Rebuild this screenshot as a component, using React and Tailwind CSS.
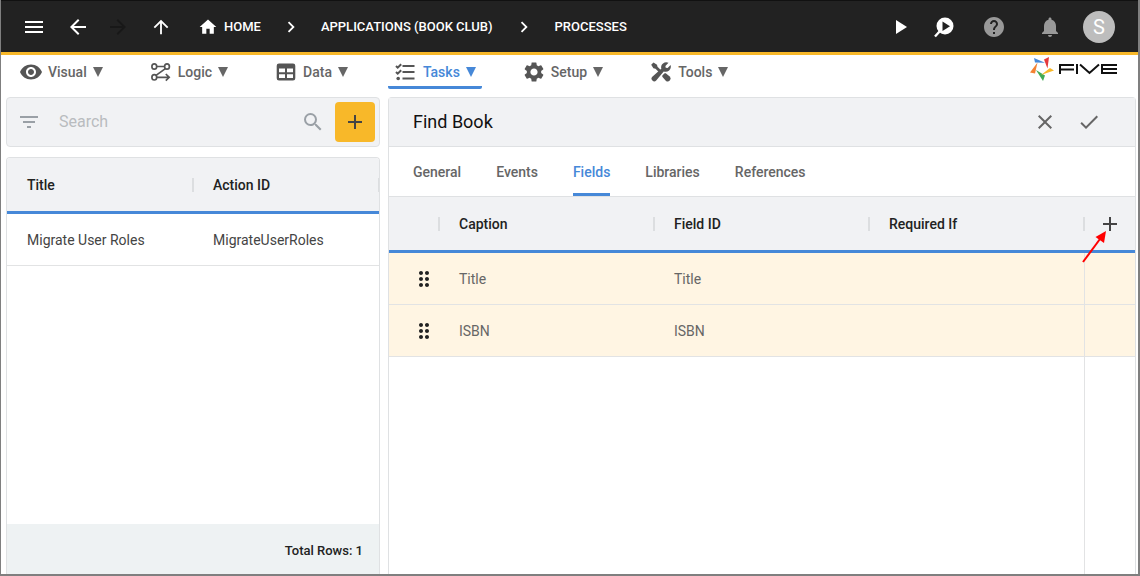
import React, { useState } from "react";
import {
  MdAdd,
  MdArrowBack,
  MdArrowForward,
  MdArrowUpward,
  MdCheck,
  MdChevronRight,
  MdClose,
  MdDragIndicator,
  MdFilterList,
  MdHelp,
  MdHome,
  MdMenu,
  MdNotifications,
  MdPlayArrow,
  MdSearch,
  MdSettings,
  MdVisibility,
} from "react-icons/md";

const InspectIcon = () => (
  <svg width="24" height="24" viewBox="0 0 24 24" fill="none">
    <path d="M8 16L3 21.500" stroke="#fff" strokeWidth="2.400" />
    <circle cx="13" cy="11" r="8.500" fill="#fff" />
    <path d="M10.500 6.500v9.500l7.500-4.750z" fill="#222" />
  </svg>
);

const LogicIcon = () => (
  <svg width="24" height="24" viewBox="0 0 24 24" fill="none" stroke="#555" strokeWidth="1.700">
    <ellipse cx="5.300" cy="6.500" rx="2.400" ry="2.700" />
    <ellipse cx="18" cy="6.500" rx="2.400" ry="2.700" />
    <ellipse cx="5.300" cy="17.300" rx="2.400" ry="2.700" />
    <path d="M7.700 6.500h7.900M16.400 8.600L7 15.400M7.700 17.300H20M16.800 14l3.400 3.300-3.400 3.300" />
  </svg>
);

const TableIcon = () => (
  <svg width="24" height="24" viewBox="0 0 24 24" fill="#555">
    <path
      fillRule="evenodd"
      d="M5 3.500h14a2.300 2.300 0 0 1 2.300 2.300v12.400a2.300 2.300 0 0 1-2.300 2.300H5a2.300 2.300 0 0 1-2.300-2.300V5.800A2.300 2.300 0 0 1 5 3.500zM5 8.500v3.700h6V8.500zM13 8.500v3.700h6V8.500zM5 14.200V18h6v-3.800zM13 14.200V18h6v-3.800z"
    />
  </svg>
);

const TasksIcon = () => (
  <svg width="24" height="24" viewBox="0 0 24 24" fill="none" stroke="#555">
    <path d="M8.500 6H20.500M8.500 12H20.500M8.500 18.500H20.500" strokeWidth="2.200" />
    <path d="M2 6l1.700 1.700L7.200 4.200M2 12l1.700 1.700L7.200 10.200" strokeWidth="2" />
    <circle cx="4.200" cy="18.500" r="1.800" fill="#555" stroke="none" />
  </svg>
);

const ToolsIcon = () => (
  <svg width="24" height="24" viewBox="0 0 24 24" fill="#555">
    <path d="M4.500 2.500L8 4.700l.5 2.100 4 4-2 2-4-4-2.100-.5-2.200-3.500z" />
    <path d="M13.300 15.500l2.300-2.300h1.200l4.200 3.600a2.900 2.900 0 0 1-4 4.100l-3.700-4.100z" />
    <path d="M19.500 2.800l-3.100 3.100.3 1.900 1.900.3 3-3a5.200 5.200 0 0 1-6.900 6.300L7.200 20.500a2.600 2.600 0 0 1-3.900-3.700l9-8a5.200 5.200 0 0 1 7.200-6z" />
  </svg>
);

const FiveLogo = () => (
  <svg width="88" height="26" viewBox="0 0 88 26" role="img" aria-label="Five" className="mt-[2px]">
    <path d="M4 1l1 4.500 10 .2z" fill="#4688d8" />
    <path d="M19 0l-5 2.500 3.500 9z" fill="#e5393c" />
    <path d="M7.500 5.500L0 15.500l5 1z" fill="#f58233" />
    <path d="M6 13l7 11 2-5.500z" fill="#41ab55" />
    <path d="M24 13.500l-4-2.500-9 7z" fill="#f8b829" />
    <g fill="none" stroke="#111" strokeWidth="2">
      <path d="M30 17V8h14M30 12.500h14M47 7v10M50 7.500l9.500 8.500L69 7.500" />
      <path d="M87 8H72v8h15M72 12h15" />
    </g>
  </svg>
);

const menuItems = [
  { label: "Visual", icon: <MdVisibility size={24} /> },
  { label: "Logic", icon: <LogicIcon /> },
  { label: "Data", icon: <TableIcon /> },
  { label: "Tasks", icon: <TasksIcon /> },
  { label: "Setup", icon: <MdSettings size={24} /> },
  { label: "Tools", icon: <ToolsIcon /> },
];

const tabs = ["General", "Events", "Fields", "Libraries", "References"];

const fields = [
  { caption: "Title", fieldId: "Title" },
  { caption: "ISBN", fieldId: "ISBN" },
];

const TopBar = () => (
  <header className="flex h-[55px] shrink-0 items-center justify-between border-t border-b-3 border-t-[#111] border-b-[#f8b829] bg-[#222] pr-[23px] pl-[21px] text-white">
    <div className="flex items-center">
      <button aria-label="Menu"><MdMenu size={24} /></button>
      <button aria-label="Back" className="ml-5"><MdArrowBack size={24} /></button>
      <button aria-label="Forward" className="ml-4 text-[#181818]" disabled><MdArrowForward size={24} /></button>
      <button aria-label="Up" className="ml-5"><MdArrowUpward size={22} /></button>
      <nav className="ml-[26px] flex items-center text-[13px] font-medium">
        <a href="#home" className="flex items-center gap-[6px]">
          <MdHome size={20} />
          HOME
        </a>
        <MdChevronRight size={22} className="mx-[19px]" />
        <a href="#applications">APPLICATIONS (BOOK CLUB)</a>
        <MdChevronRight size={22} className="mx-5" />
        <a href="#processes">PROCESSES</a>
      </nav>
    </div>
    <div className="flex items-center">
      <button aria-label="Run"><MdPlayArrow size={24} /></button>
      <button aria-label="Inspect" className="ml-5"><InspectIcon /></button>
      <button aria-label="Help" className="ml-[26px] text-[#999]"><MdHelp size={24} /></button>
      <button aria-label="Notifications" className="ml-8 text-[#999]"><MdNotifications size={24} /></button>
      <button aria-label="Account" className="ml-[21px] h-8 w-8 rounded-full bg-[#bdbdbd] text-xl leading-8">S</button>
    </div>
  </header>
);

const MainMenu = ({ active, onSelect }) => (
  <div className="flex h-[42px] shrink-0 items-start justify-between pr-5 pl-3">
    <nav className="flex gap-[34px]">
      {menuItems.map(({ label, icon }) => (
        <button
          key={label}
          onClick={() => onSelect(label)}
          className={`flex h-[34px] items-center rounded-b-xs border-b-3 px-[6px] pt-[2px] text-sm font-medium ${
            active === label ? "border-[#4688d8] text-[#4688d8]" : "border-transparent text-[#666]"
          }`}
        >
          <span className="mr-[5px] text-[#555]">{icon}</span>
          {label}
          <svg width="10" height="10" viewBox="0 0 10 10" fill="currentColor" className="ml-[6px]">
            <path d="M0 0h10L5 10z" />
          </svg>
        </button>
      ))}
    </nav>
    <FiveLogo />
  </div>
);

const Divider = () => <span className="-mr-px h-[14px] w-[2px] bg-[#dcdee0]" />;

const ProcessList = () => (
  <aside className="flex w-[374px] shrink-0 flex-col">
    <div className="flex h-[50px] items-center rounded border border-[#dfe1e3] bg-[#f1f2f4] pr-1 pl-[10px] text-[#9aa0a6]">
      <button aria-label="Filter"><MdFilterList size={24} /></button>
      <input
        type="text"
        aria-label="Search"
        placeholder="Search"
        className="ml-[18px] min-w-0 flex-1 bg-transparent text-base text-[#333] outline-none placeholder:text-[#b9bcbf]"
      />
      <button aria-label="Run search"><MdSearch size={24} /></button>
      <button aria-label="Add process" className="ml-[10px] flex h-10 w-10 items-center justify-center rounded bg-[#f8b829] text-[#444]">
        <MdAdd size={24} />
      </button>
    </div>

    <div className="mt-[10px] flex min-h-0 flex-1 flex-col overflow-hidden rounded-t border border-b-0 border-[#dfe1e3]">
      <table className="w-full table-fixed border-separate border-spacing-0 text-left text-sm">
        <thead className="bg-[#f1f2f4] text-[#222]">
          <tr className="h-14">
            {["Title", "Action ID"].map((name) => (
              <th key={name} className="border-b-3 border-[#4688d8] pl-5 font-medium">
                <div className="flex items-center justify-between">{name}<Divider /></div>
              </th>
            ))}
          </tr>
        </thead>
        <tbody className="text-[#444]">
          <tr className="h-[52px]">
            <td className="border-b border-[#e2e3e4] pl-5">Migrate User Roles</td>
            <td className="border-b border-[#e2e3e4] pl-5">MigrateUserRoles</td>
          </tr>
        </tbody>
      </table>
      <div className="mt-auto flex h-[50px] items-center justify-end bg-[#eef2f3] pt-[3px] pr-4 text-[13px] font-medium text-[#222]">
        Total Rows: 1
      </div>
    </div>
  </aside>
);

const FieldsTable = () => (
  <div className="flex min-h-0 flex-1 flex-col">
    <table className="w-full table-fixed border-separate border-spacing-0 text-left text-sm">
      <colgroup>
        <col className="w-[50px]" />
        <col />
        <col />
        <col />
        <col className="w-[51px]" />
      </colgroup>
      <thead className="bg-[#f1f2f4] text-[#222]">
        <tr className="h-14">
          <th className="border-b-3 border-[#4688d8]">
            <div className="flex justify-end"><Divider /></div>
          </th>
          {["Caption", "Field ID", "Required If"].map((name) => (
            <th key={name} className="border-b-3 border-[#4688d8] pl-5 font-medium">
              <div className="flex items-center justify-between">{name}<Divider /></div>
            </th>
          ))}
          <th className="border-b-3 border-[#4688d8]">
            <div className="relative flex justify-center">
              <button aria-label="Add field" className="text-[#444]"><MdAdd size={24} /></button>
              <svg className="absolute top-4 -left-1" width="30" height="36" viewBox="0 0 30 36">
                <path d="M3 34L20 11" stroke="#f00" strokeWidth="2" />
                <path d="M26 3L15.500 9l8.500 6z" fill="#f00" />
              </svg>
            </div>
          </th>
        </tr>
      </thead>
      <tbody className="text-[#666]">
        {fields.map(({ caption, fieldId }) => (
          <tr key={fieldId} className="h-[52px] bg-[#fff5e3]">
            <td className="border-b border-[#e2e3e4] pl-[23px] text-[#222]"><MdDragIndicator size={24} /></td>
            <td className="border-b border-[#e2e3e4] pl-5">{caption}</td>
            <td className="border-b border-[#e2e3e4] pl-5">{fieldId}</td>
            <td className="border-b border-[#e2e3e4]" />
            <td className="border-b border-l border-[#e2e3e4]" />
          </tr>
        ))}
      </tbody>
    </table>
    <div className="flex flex-1 justify-end">
      <div className="w-[51px] border-l border-[#e2e3e4]" />
    </div>
  </div>
);

const ProcessForm = () => {
  const [tab, setTab] = useState("Fields");

  return (
    <main className="flex min-w-0 flex-1 flex-col rounded-t border border-b-0 border-[#dfe1e3]">
      <div className="flex h-[49px] shrink-0 items-center border-b border-[#dfe1e3] bg-[#f1f2f4] pr-[34px] pl-6">
        <h1 className="flex-1 text-lg text-[#111]">Find Book</h1>
        <div className="flex gap-5 text-[#666]">
          <button aria-label="Cancel"><MdClose size={24} /></button>
          <button aria-label="Save"><MdCheck size={24} /></button>
        </div>
      </div>
      <div className="flex h-[50px] shrink-0 gap-[35px] border-b border-[#dfe1e3] pl-6">
        {tabs.map((name) => (
          <button
            key={name}
            onClick={() => setTab(name)}
            className={`rounded-t-xs border-b-3 pt-[3px] text-sm font-medium ${
              tab === name ? "border-[#4688d8] text-[#4688d8]" : "border-transparent text-[#666]"
            }`}
          >
            {name}
          </button>
        ))}
      </div>
      <FieldsTable />
    </main>
  );
};

export default function App() {
  const [menu, setMenu] = useState("Tasks");

  return (
    <div className="flex h-screen flex-col border-r-2 border-b-2 border-l border-[#7f7f7f] bg-white font-['Roboto',sans-serif]">
      <TopBar />
      <MainMenu active={menu} onSelect={setMenu} />
      <div className="flex min-h-0 flex-1 gap-2 pr-[2px] pl-[5px]">
        <ProcessList />
        <ProcessForm />
      </div>
    </div>
  );
}
